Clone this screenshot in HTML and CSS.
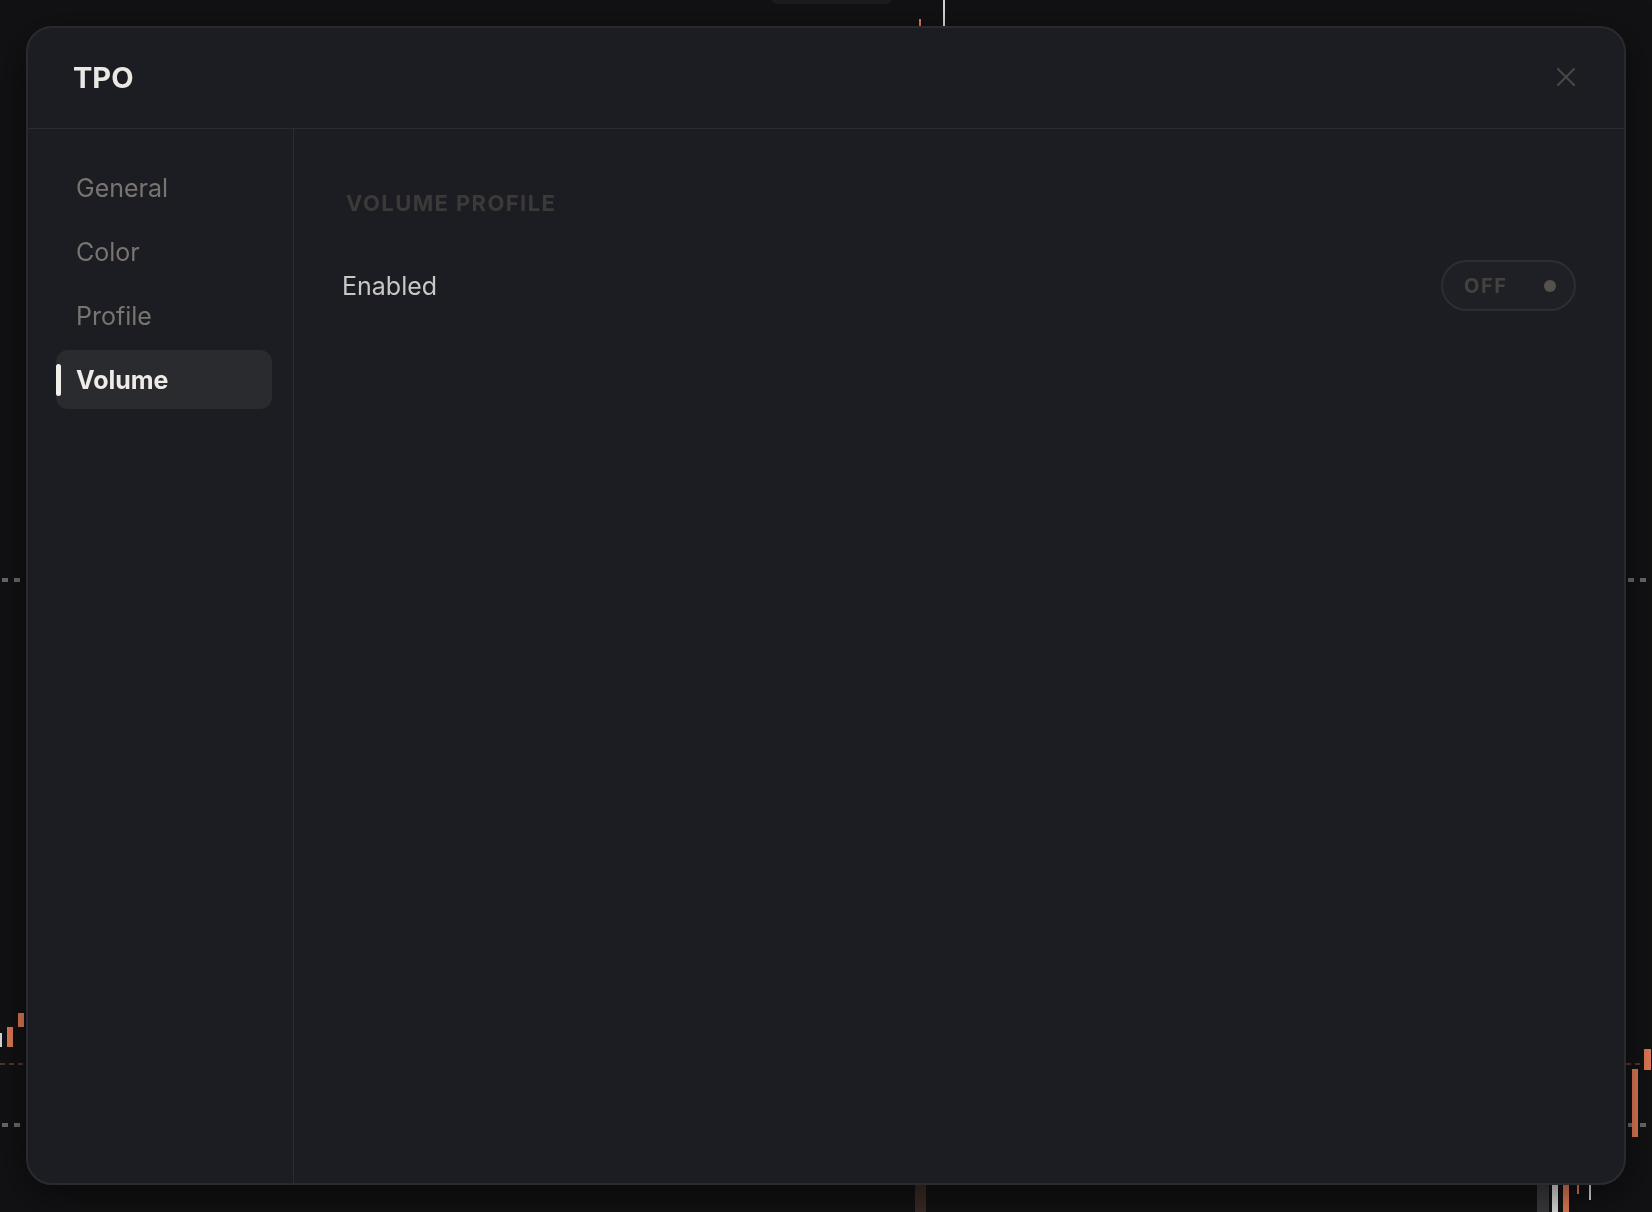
FILE: index.html
```html
<!DOCTYPE html>
<html lang="en">
<head>
    <meta charset="UTF-8">
    <meta name="viewport" content="width=device-width, initial-scale=1.0">
    <title>TPO Settings</title>
    <link rel="stylesheet" href="styles.css">
</head>
<body>
    <!-- Chart behind the dialog -->
    <div class="chart">
        <span class="tab-top"></span>
        <span class="wick white" style="left:943px;top:0;height:26px"></span>
        <span class="wick orange" style="left:919px;top:19px;height:7px"></span>

        <span class="dash gray" style="left:0;top:578px;width:26px"></span>
        <span class="dash gray" style="left:1626px;top:578px;width:26px"></span>
        <span class="dash gray" style="left:0;top:1123px;width:26px"></span>
        <span class="dash gray" style="left:1626px;top:1123px;width:26px"></span>
        <span class="dash brown" style="left:0;top:1063px;width:26px"></span>
        <span class="dash brown" style="left:1626px;top:1063px;width:26px"></span>

        <span class="candle orange" style="left:18px;top:1013px;width:6px;height:14px"></span>
        <span class="candle orange" style="left:7px;top:1027px;width:6px;height:20px"></span>
        <span class="candle white" style="left:0;top:1033px;width:2px;height:14px"></span>

        <span class="candle orange" style="left:1644px;top:1049px;width:7px;height:21px"></span>
        <span class="candle orange" style="left:1632px;top:1069px;width:6px;height:68px"></span>

        <span class="candle dark" style="left:1537px;top:1185px;width:12px;height:27px"></span>
        <span class="candle white" style="left:1552px;top:1185px;width:6px;height:27px"></span>
        <span class="candle orange" style="left:1563px;top:1185px;width:6px;height:27px"></span>
        <span class="wick orange" style="left:1577px;top:1185px;height:9px"></span>
        <span class="wick white" style="left:1589px;top:1185px;height:15px"></span>
        <span class="candle brownbar" style="left:915px;top:1185px;width:11px;height:27px"></span>
    </div>

    <!-- Settings dialog -->
    <div class="overlay">
        <div class="modal">
            <header class="modal-header">
                <h1>TPO</h1>
                <button class="close-btn" aria-label="Close">
                    <svg width="18" height="18" viewBox="0 0 18 18">
                        <path d="M1 1 L17 17 M17 1 L1 17" stroke="currentColor" stroke-width="2" stroke-linecap="round"/>
                    </svg>
                </button>
            </header>

            <div class="modal-body">
                <nav class="side-nav">
                    <a href="#">General</a>
                    <a href="#">Color</a>
                    <a href="#">Profile</a>
                    <a href="#" class="active">Volume</a>
                </nav>

                <main class="panel">
                    <h2>Volume Profile</h2>
                    <div class="setting-row">
                        <span class="setting-label">Enabled</span>
                        <button class="toggle">
                            <span class="toggle-text">OFF</span>
                            <span class="toggle-dot"></span>
                        </button>
                    </div>
                </main>
            </div>
        </div>
    </div>
</body>
</html>
```

FILE: styles.css
```css
/* Basic reset */
* {
    margin: 0;
    padding: 0;
    box-sizing: border-box;
}

body {
    background-color: #121214;
    font-family: Inter, "Noto Sans", sans-serif;
    width: 1652px;
    height: 1212px;
    overflow: hidden;
}

/* Chart behind the dialog */
.chart {
    position: fixed;
    inset: 0;
}

.chart span {
    position: absolute;
    display: block;
}

.tab-top {
    left: 771px;
    top: -10px;
    width: 121px;
    height: 14px;
    background-color: #1c1c1e;
    border-radius: 6px;
}

.wick {
    width: 2px;
}

.wick.white {
    background-color: #d8d8d8;
}

.wick.orange {
    background-color: #e07a55;
}

.dash {
    height: 4px;
}

.dash.gray {
    background: repeating-linear-gradient(90deg, transparent 0 2px, #6b6b6b 2px 8px, transparent 8px 12px);
}

.dash.brown {
    height: 2px;
    background: repeating-linear-gradient(90deg, #5b3428 0 5px, transparent 5px 9px);
}

.candle.orange {
    background-color: #e07a55;
}

.candle.white {
    background-color: #dcdcdc;
}

.candle.dark {
    background-color: #3a3a3c;
}

.candle.brownbar {
    background-color: #3b2a25;
}

/* Overlay and dialog */
.overlay {
    position: fixed;
    inset: 0;
    padding: 26px 26px 27px 26px;
    display: flex;
}

.modal {
    flex: 1;
    display: flex;
    flex-direction: column;
    background-color: #1b1d23;
    border: 2px solid #2a2b2e;
    border-radius: 26px;
    overflow: hidden;
    box-shadow: 0 10px 40px rgba(0, 0, 0, 0.5);
}

.modal-header {
    height: 101px;
    flex-shrink: 0;
    display: flex;
    justify-content: space-between;
    align-items: center;
    padding: 0 49px 2px 45px;
    border-bottom: 1px solid #2a2c32;
}

.modal-header h1 {
    font-size: 29px;
    font-weight: 700;
    color: #ebe8e4;
}

.close-btn {
    background: none;
    border: none;
    color: #4a4845;
    width: 18px;
    height: 18px;
    display: flex;
    cursor: pointer;
}

.modal-body {
    flex: 1;
    display: flex;
}

/* Left navigation */
.side-nav {
    width: 266px;
    flex-shrink: 0;
    border-right: 1px solid #2a2c32;
    padding: 29px 21px 0 28px;
    display: flex;
    flex-direction: column;
    gap: 5px;
}

.side-nav a {
    position: relative;
    display: flex;
    align-items: center;
    height: 59px;
    padding-left: 20px;
    border-radius: 12px;
    font-size: 25px;
    color: #78746f;
    text-decoration: none;
}

.side-nav a.active {
    background-color: #2a2b2f;
    color: #efebe7;
    font-weight: 700;
}

.side-nav a.active::before {
    content: "";
    position: absolute;
    left: 0;
    top: 14px;
    width: 5px;
    height: 32px;
    border-radius: 3px;
    background-color: #f2efeb;
}

/* Right panel */
.panel {
    flex: 1;
    padding: 61px 48px 0 48px;
}

.panel h2 {
    font-size: 22px;
    font-weight: 700;
    line-height: 1.2;
    letter-spacing: 1.4px;
    text-transform: uppercase;
    color: #3c3a38;
    padding-left: 4px;
}

.setting-row {
    margin-top: 44px;
    display: flex;
    justify-content: space-between;
    align-items: center;
}

.setting-label {
    font-size: 25px;
    color: #c9c7c4;
}

.toggle {
    width: 135px;
    height: 51px;
    border: 2px solid #2c2e33;
    border-radius: 26px;
    background-color: #1e2026;
    display: flex;
    align-items: center;
    justify-content: space-between;
    padding: 0 18px 0 21px;
    cursor: pointer;
}

.toggle-text {
    font-family: Inter, "Noto Sans", sans-serif;
    font-size: 20px;
    font-weight: 700;
    letter-spacing: 1.5px;
    color: #44423f;
}

.toggle-dot {
    width: 12px;
    height: 12px;
    border-radius: 50%;
    background-color: #55524e;
}
```
